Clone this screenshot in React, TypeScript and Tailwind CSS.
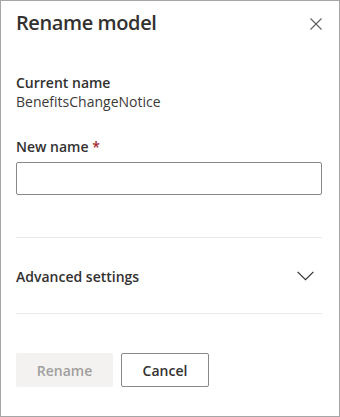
import { useState } from 'react';

function CloseIcon() {
  return (
    <svg width="12" height="12" viewBox="0 0 12 12" fill="none" aria-hidden="true">
      <path d="M0.5 0.5L11.5 11.5M11.5 0.5L0.5 11.5" stroke="#605e5c" strokeWidth="1.1" />
    </svg>
  );
}

function ChevronIcon() {
  return (
    <svg width="17" height="10" viewBox="0 0 17 10" fill="none" aria-hidden="true">
      <path d="M0.6 0.8L8.5 8.7L16.4 0.8" stroke="#323130" strokeWidth="1.2" />
    </svg>
  );
}

export default function App() {
  const [name, setName] = useState('');

  return (
    <div
      className="flex h-[417px] w-[340px] flex-col border border-[#a6a6a6] bg-white pl-[15px] pr-[17px] text-[#323130]"
      style={{ fontFamily: '"Open Sans", "Noto Sans", sans-serif' }}
    >
      {/* header */}
      <div className="mt-[8px] flex items-start justify-between">
        <h1 className="text-[20px] font-semibold leading-[28px] tracking-[-0.4px]">Rename model</h1>
        <button aria-label="Close" className="mt-[9px] flex h-3 w-3 items-center justify-center">
          <CloseIcon />
        </button>
      </div>

      {/* current name */}
      <p className="mt-[36px] text-[14px] font-semibold leading-[19px]">Current name</p>
      <p className="text-[14px] leading-[19px] text-[#3b3a39]">BenefitsChangeNotice</p>

      {/* new name */}
      <label className="mt-[26px] text-[14px] font-semibold leading-[20px]">
        New name <span className="text-[#a4262c]">*</span>
      </label>
      <input
        value={name}
        onChange={(e) => setName(e.target.value)}
        className="mt-[5px] h-[33px] w-full rounded-[2px] border border-[#8a8886] px-2 text-[14px] outline-none"
      />

      <div className="mt-[42px] h-px bg-[#edebe9]" />

      {/* advanced */}
      <div className="mt-[29px] flex items-start justify-between">
        <span className="text-[14px] font-semibold leading-[20px]">Advanced settings</span>
        <span className="mr-[8px] mt-[4px] flex">
          <ChevronIcon />
        </span>
      </div>

      <div className="mt-[26px] h-px bg-[#edebe9]" />

      {/* footer */}
      <div className="mt-[39px] flex gap-2">
        <button
          disabled
          className="h-[34px] w-[97px] rounded-[2px] bg-[#f3f2f1] text-[14px] font-semibold text-[#a19f9d]"
        >
          Rename
        </button>
        <button className="h-[34px] w-[88px] rounded-[2px] border border-[#8a8886] bg-white text-[14px] font-semibold text-[#323130]">
          Cancel
        </button>
      </div>
    </div>
  );
}
